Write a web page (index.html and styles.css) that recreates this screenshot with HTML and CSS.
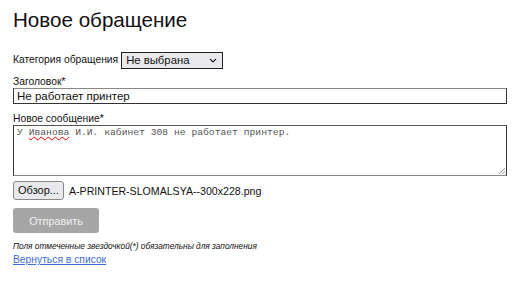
FILE: index.html
```
<!DOCTYPE html>
<html lang="ru">
<head>
<meta charset="utf-8">
<title>Новое обращение</title>
<link rel="stylesheet" href="styles.css">
</head>
<body>
<div class="page">
  <h1 class="title">Новое обращение</h1>
  <form class="form">
    <div class="row-inline">
      <label class="label">Категория обращения</label>
      <div class="select">
        <span>Не выбрана</span>
        <svg class="chev" width="8" height="5" viewBox="0 0 8 5"><path d="M1 1 L4 4 L7 1" fill="none" stroke="#222" stroke-width="1.2"/></svg>
      </div>
    </div>
    <div class="field first">
      <label class="label">Заголовок*</label>
      <div class="input">Не работает принтер</div>
    </div>
    <div class="field second">
      <label class="label">Новое сообщение*</label>
      <div class="textarea"><span class="typo">У <span class="spell">Иванова</span> И.И. кабинет 308 не работает принтер.</span>
        <svg class="grip" width="6" height="6" viewBox="0 0 6 6"><path d="M6 0 L0 6 M6 3 L3 6" stroke="#999" stroke-width="1"/></svg>
      </div>
    </div>
    <div class="file-row">
      <span class="file-btn">Обзор...</span>
      <span class="file-name">A-PRINTER-SLOMALSYA--300x228.png</span>
    </div>
    <div class="submit">Отправить</div>
    <p class="note">Поля отмеченные звездочкой(*) обязательны для заполнения</p>
    <a class="back" href="#">Вернуться в список</a>
  </form>
</div>
</body>
</html>
```
FILE: styles.css
```
* { box-sizing: border-box; }
body {
  margin: 0;
  background: #fff;
  font-family: "Liberation Sans", Arial, sans-serif;
  color: #111;
}
.page { padding: 7px 13px 0 13px; width: 520px; }
.title {
  margin: 0;
  font-weight: normal;
  font-size: 20.6px;
  line-height: 25px;
}
.form { margin-top: 19px; display: flex; flex-direction: column; }
.row-inline { display: flex; align-items: center; gap: 3px; height: 18px; }
.label { font-size: 10.3px; line-height: 12px; }
.select {
  width: 102px; height: 17px;
  border: 1px solid #222;
  background: #e9e9ed;
  display: flex; align-items: center; justify-content: space-between;
  padding: 0 5px 0 4px;
  font-size: 11.3px;
}
.chev { margin-top: 1px; }
.field { display: flex; flex-direction: column; }
.field.first { margin-top: 7px; }
.field.second { margin-top: 9px; }
.input {
  width: 494px; height: 16px;
  border: 1px solid #333;
  border-top-color: #888;
  font-size: 11.5px; line-height: 14px;
  padding: 0 3px;
}
.textarea {
  position: relative;
  width: 494px; height: 51px;
  border: 1px solid #333;
  border-top-color: #555;
  border-bottom-color: #888;
  font-family: "Liberation Mono", "Courier New", monospace;
  font-size: 9.7px; line-height: 11px;
  padding: 1px 3px;
  color: #555;
}
.spell { text-decoration: underline wavy #e00; text-decoration-thickness: 1px; }
.grip { position: absolute; right: 1px; bottom: 1px; }
.file-row { display: flex; align-items: center; gap: 5px; margin-top: 5px; }
.file-btn {
  height: 19px; width: 51px;
  border: 1px solid #888; border-radius: 3px;
  background: #e9e9ed;
  font-size: 11px; line-height: 17px;
  text-align: center;
}
.file-name { font-size: 10.6px; }
.submit {
  margin-top: 8px;
  width: 86px; height: 25px;
  border-radius: 3px;
  background: #a6a6a6;
  color: #f0f0f0;
  font-size: 10.8px;
  display: flex; align-items: center; justify-content: center;
}
.note {
  margin: 8px 0 0 0;
  font-size: 8.3px; font-style: italic; line-height: 10px;
}
.back { font-size: 10.3px; line-height: 13px; color: #3a6ecf; text-decoration: underline; margin-top: 2px; }
```
